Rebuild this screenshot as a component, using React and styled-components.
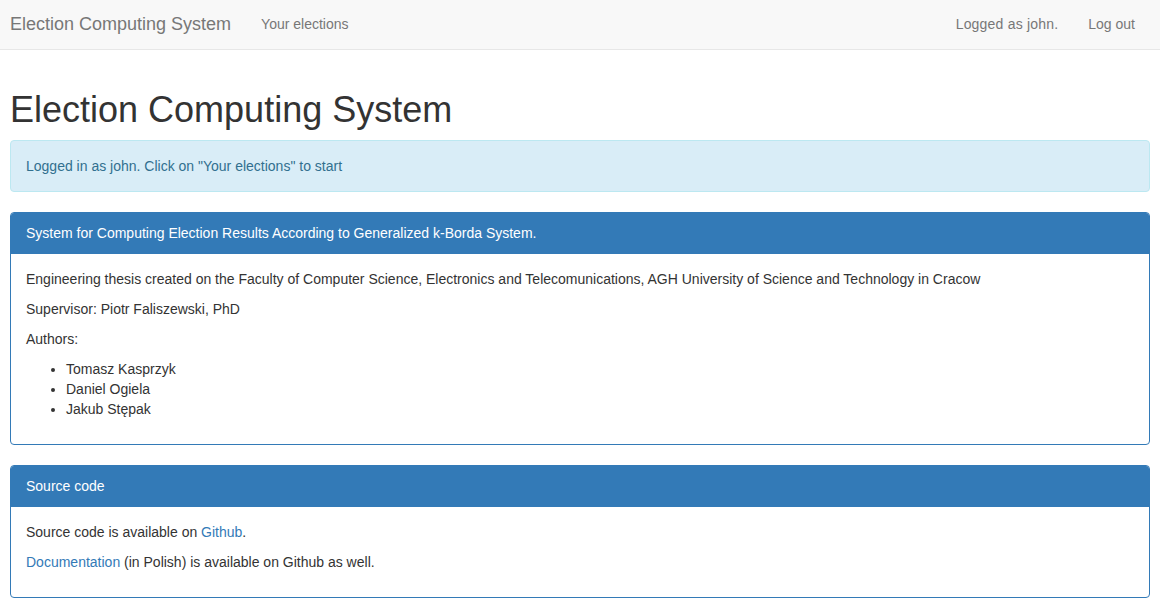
import React from "react";
import styled, { createGlobalStyle } from "styled-components";

const Global = createGlobalStyle`
  * { box-sizing: border-box; }
  html, body { margin: 0; padding: 0; }
  body {
    font-family: "Liberation Sans", Arial, Helvetica, sans-serif;
    font-size: 14px;
    line-height: 20px;
    color: #333;
    background: #fff;
  }
`;

const Navbar = styled.nav`
  height: 50px;
  background: #f8f8f8;
  border-bottom: 1px solid #e7e7e7;
  display: flex;
  align-items: stretch;
  justify-content: space-between;
  padding: 0 10px;
  margin-bottom: 20px;
`;

const NavGroup = styled.div`
  display: flex;
  align-items: stretch;
`;

const Brand = styled.a`
  display: flex;
  align-items: center;
  font-size: 18px;
  line-height: 20px;
  color: #777;
  padding: 14px 15px 15px 0;
  text-decoration: none;
`;

const NavLink = styled.a`
  display: flex;
  align-items: center;
  color: #777;
  padding: 14px 15px 15px;
  text-decoration: none;
  line-height: 20px;
  letter-spacing: ${(p) => (p.$wide ? "0.2px" : "0")};
`;

const Container = styled.main`
  display: flow-root;
  padding: 0 10px;
`;

const Title = styled.h1`
  font-size: 36px;
  font-weight: 500;
  line-height: 1.1;
  margin: 20px 0 10px;
  color: #333;
`;

const Alert = styled.div`
  padding: 15px;
  border: 1px solid #bce8f1;
  background: #d9edf7;
  color: #31708f;
  border-radius: 4px;
  margin-bottom: 20px;
`;

const Panel = styled.section`
  border: 1px solid #337ab7;
  border-radius: 4px;
  margin-bottom: ${(p) => (p.$last ? "0" : "20px")};
  overflow: hidden;
`;

const PanelHeading = styled.div`
  background: #337ab7;
  color: #fff;
  padding: 10px 15px;
  border-bottom: 1px solid #337ab7;
`;

const PanelBody = styled.div`
  padding: 15px;
`;

const P = styled.p`
  margin: 0 0 10px;
`;

const List = styled.ul`
  margin: 0 0 10px;
  padding-left: 40px;
`;

const Link = styled.a`
  color: #337ab7;
  text-decoration: none;
`;

export default function App() {
  return (
    <>
      <Global />
      <Navbar>
        <NavGroup>
          <Brand href="#">Election Computing System</Brand>
          <NavLink href="#">Your elections</NavLink>
        </NavGroup>
        <NavGroup>
          <NavLink href="#" $wide>Logged as john.</NavLink>
          <NavLink href="#">Log out</NavLink>
        </NavGroup>
      </Navbar>
      <Container>
        <Title>Election Computing System</Title>
        <Alert>Logged in as john. Click on "Your elections" to start</Alert>
        <Panel>
          <PanelHeading>
            System for Computing Election Results According to Generalized k-Borda System.
          </PanelHeading>
          <PanelBody>
            <P>
              Engineering thesis created on the Faculty of Computer Science, Electronics and
              Telecomunications, AGH University of Science and Technology in Cracow
            </P>
            <P>Supervisor: Piotr Faliszewski, PhD</P>
            <P>Authors:</P>
            <List>
              <li>Tomasz Kasprzyk</li>
              <li>Daniel Ogiela</li>
              <li>Jakub Stępak</li>
            </List>
          </PanelBody>
        </Panel>
        <Panel $last>
          <PanelHeading>Source code</PanelHeading>
          <PanelBody>
            <P>
              Source code is available on <Link href="#">Github</Link>.
            </P>
            <P>
              <Link href="#">Documentation</Link> (in Polish) is available on Github as well.
            </P>
          </PanelBody>
        </Panel>
      </Container>
    </>
  );
}
